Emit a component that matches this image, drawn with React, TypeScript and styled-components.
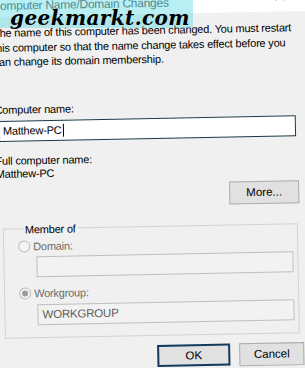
import React from 'react';
import styled, { createGlobalStyle } from 'styled-components';

const GlobalStyle = createGlobalStyle`
  html, body {
    margin: 0;
    padding: 0;
    background: #f0f0f0;
  }
  body {
    font-family: 'Liberation Sans', Arial, sans-serif;
  }
`;

const Frame = styled.div`
  position: relative;
  width: 305px;
  height: 368px;
  overflow: hidden;
  background: #f0f0f0;
`;

// the screenshot is tilted a little, so the whole dialog is turned
const Dialog = styled.div`
  width: 325px;
  margin: -6px 0 0 -10px;
  transform: rotate(-1.1deg);
  transform-origin: 162px 190px;
  font-family: 'Liberation Sans', Arial, sans-serif;
  font-size: 11px;
  letter-spacing: -0.2px;
  color: #000;
`;

const TitleBar = styled.div`
  height: 20px;
  background: #fff;
  display: flex;
  justify-content: space-between;
  align-items: flex-start;
  padding: 0 26px 0 5px;
`;

const TitleText = styled.div`
  font-size: 12px;
  letter-spacing: -0.25px;
  line-height: 13px;
  padding-top: 3px;
  color: #555;
  white-space: nowrap;
`;

const CloseGlyph = styled.svg`
  display: block;
  margin-top: -1px;
`;

const Body = styled.div`
  padding: 9px 16px 0 6px;
  display: flex;
  flex-direction: column;
`;

const Message = styled.p`
  margin: 0;
  line-height: 14.5px;
  white-space: nowrap;
`;

const Label = styled.div<{ $top: number }>`
  line-height: 13px;
  margin-top: ${(p) => p.$top}px;
  white-space: nowrap;
`;

const NameBox = styled.div`
  margin: 4px 2px 0 4px;
  height: 21px;
  box-sizing: border-box;
  border: 1px solid #1b3a48;
  background: #fff;
  display: flex;
  align-items: center;
  padding-left: 3px;
`;

const Caret = styled.span`
  display: inline-block;
  width: 1px;
  height: 13px;
  background: #000;
  margin-left: 1px;
`;

const Button = styled.button<{ $primary?: boolean; $width: number }>`
  width: ${(p) => p.$width}px;
  height: ${(p) => (p.$primary ? 22 : 23)}px;
  box-sizing: border-box;
  padding: 0;
  font-family: 'Liberation Sans', Arial, sans-serif;
  font-size: 11.5px;
  color: #000;
  background: #e1e1e1;
  border: ${(p) => (p.$primary ? '2px solid #143a5c' : '1px solid #adadad')};
  border-radius: 0;
`;

const MoreRow = styled.div`
  display: flex;
  justify-content: flex-end;
  margin-top: 5px;
`;

const Group = styled.fieldset`
  margin: 14px 2px 0 6px;
  padding: 0 4px 12px 14px;
  border: 1px solid #d3d3d3;
  min-width: 0;
`;

const Legend = styled.legend`
  padding: 0 2px;
  margin-left: 5px;
  line-height: 14px;
`;

const RadioRow = styled.div<{ $top: number }>`
  display: flex;
  align-items: center;
  gap: 3px;
  height: 14px;
  margin-top: ${(p) => p.$top}px;
  color: #6a6a6a;
`;

const Radio = styled.span<{ $checked?: boolean }>`
  width: 12px;
  height: 12px;
  box-sizing: border-box;
  border-radius: 50%;
  border: 1px solid #bcbcbc;
  background: #f4f4f4;
  display: flex;
  align-items: center;
  justify-content: center;
  &::after {
    content: '';
    width: 6px;
    height: 6px;
    border-radius: 50%;
    background: ${(p) => (p.$checked ? '#9c9c9c' : 'transparent')};
  }
`;

const DisabledBox = styled.div<{ $top: number }>`
  margin: ${(p) => p.$top}px 0 0 18px;
  height: 21px;
  box-sizing: border-box;
  border: 1px solid #bfbfbf;
  background: #f2f2f2;
  color: #5f5f5f;
  font-size: 11.5px;
  display: flex;
  align-items: center;
  padding-left: 4px;
`;

const Actions = styled.div`
  display: flex;
  justify-content: flex-end;
  gap: 9px;
  margin: 9px -2px 0 0;
`;

const Watermark = styled.div`
  position: absolute;
  top: 0;
  left: 0;
  width: 193px;
  height: 28px;
  background: rgba(80, 215, 225, 0.4);
  font-family: 'DejaVu Serif', 'Liberation Serif', serif;
  font-weight: bold;
  font-style: italic;
  font-size: 20px;
  letter-spacing: 0.4px;
  line-height: 20px;
  padding: 8px 0 0 10px;
  box-sizing: border-box;
  color: #000;
  white-space: nowrap;
`;

const App = (): JSX.Element => {
  return (
    <Frame>
      <GlobalStyle />
      <Dialog>
        <TitleBar>
          <TitleText>Computer Name/Domain Changes</TitleText>
          <CloseGlyph width="10" height="10" viewBox="0 0 10 10">
            <path d="M0 0 L10 10 M10 0 L0 10" stroke="#222" strokeWidth="1.2" />
          </CloseGlyph>
        </TitleBar>
        <Body>
          <Message>
            The name of this computer has been changed. You must restart
            <br />
            this computer so that the name change takes effect before you
            <br />
            can change its domain membership.
          </Message>
          <Label $top={34}>Computer name:</Label>
          <NameBox>
            Matthew-PC
            <Caret />
          </NameBox>
          <Label $top={13}>Full computer name:</Label>
          <Label $top={0}>Matthew-PC</Label>
          <MoreRow>
            <Button $width={70}>More...</Button>
          </MoreRow>
          <Group>
            <Legend>Member of</Legend>
            <RadioRow $top={3}>
              <Radio />
              Domain:
            </RadioRow>
            <DisabledBox $top={3} />
            <RadioRow $top={9}>
              <Radio $checked />
              Workgroup:
            </RadioRow>
            <DisabledBox $top={4}>WORKGROUP</DisabledBox>
          </Group>
          <Actions>
            <Button $primary $width={73}>OK</Button>
            <Button $width={65}>Cancel</Button>
          </Actions>
        </Body>
      </Dialog>
      <Watermark>geekmarkt.com</Watermark>
    </Frame>
  );
};

export default App;
